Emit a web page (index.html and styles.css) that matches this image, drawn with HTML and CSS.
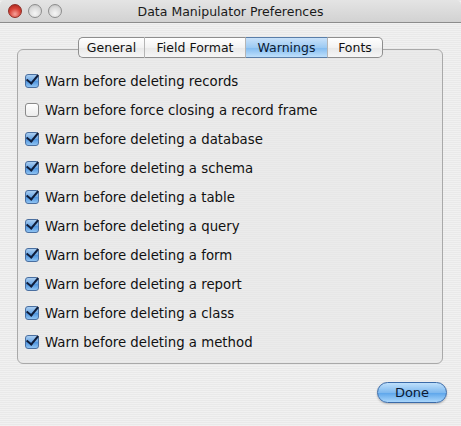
FILE: index.html
```html
<!DOCTYPE html>
<html>
<head>
<meta charset="utf-8">
<link rel="stylesheet" href="styles.css">
</head>
<body>
<div class="window">
  <div class="titlebar">
    <div class="lights">
      <span class="light red"></span>
      <span class="light"></span>
      <span class="light"></span>
    </div>
    <div class="title">Data Manipulator Preferences</div>
  </div>
  <div class="content">
    <div class="tabview">
      <div class="tabs">
        <div class="tab t-general">General</div>
        <div class="tab t-field">Field Format</div>
        <div class="tab t-warn active">Warnings</div>
        <div class="tab t-fonts">Fonts</div>
      </div>
      <div class="box">
        <label class="row"><span class="cb on"></span>Warn before deleting records</label>
        <label class="row"><span class="cb"></span>Warn before force closing a record frame</label>
        <label class="row"><span class="cb on"></span>Warn before deleting a database</label>
        <label class="row"><span class="cb on"></span>Warn before deleting a schema</label>
        <label class="row"><span class="cb on"></span>Warn before deleting a table</label>
        <label class="row"><span class="cb on"></span>Warn before deleting a query</label>
        <label class="row"><span class="cb on"></span>Warn before deleting a form</label>
        <label class="row"><span class="cb on"></span>Warn before deleting a report</label>
        <label class="row"><span class="cb on"></span>Warn before deleting a class</label>
        <label class="row"><span class="cb on"></span>Warn before deleting a method</label>
      </div>
    </div>
    <div class="footer">
      <button class="done">Done</button>
    </div>
  </div>
</div>
</body>
</html>
```
FILE: styles.css
```css
* { box-sizing: border-box; }
html, body { margin: 0; padding: 0; }
body {
  width: 461px;
  height: 426px;
  overflow: hidden;
  font-family: "DejaVu Sans", "Liberation Sans", sans-serif;
  font-size: 12px;
  color: #111;
}
.window {
  width: 461px;
  height: 426px;
  background-color: #e9e9e9;
  background-image: repeating-linear-gradient(0deg, rgba(255,255,255,0.35) 0px, rgba(255,255,255,0.35) 1px, transparent 1px, transparent 2px);
}
.titlebar {
  height: 23px;
  position: relative;
  display: flex;
  align-items: center;
  justify-content: center;
  background: linear-gradient(#e4e4e4, #d2d2d2);
  border-bottom: 1px solid #8c8c8c;
  border-top-left-radius: 5px;
  border-top-right-radius: 5px;
}
.lights {
  position: absolute;
  left: 8px;
  top: 4px;
  display: flex;
  gap: 6px;
}
.light {
  width: 14px;
  height: 14px;
  border-radius: 50%;
  border: 1px solid #8d8d8d;
  background: radial-gradient(circle at 50% 70%, #f6f6f6 0%, #d9d9d9 60%, #b8b8b8 100%);
}
.light.red {
  border-color: #8e2c24;
  background: radial-gradient(circle at 50% 75%, #f7a39b 0%, #d9453a 50%, #a01f17 100%);
}
.title {
  font-size: 12.5px;
  color: #1a1a1a;
  margin-top: 1px;
}
.content {
  padding: 14px 18px 0 17px;
}
.tabview {
  display: flex;
  flex-direction: column;
}
.tabs {
  display: flex;
  justify-content: center;
  position: relative;
  z-index: 1;
  margin-bottom: -9px;
  margin-left: 1px;
}
.tab {
  height: 21px;
  display: flex;
  align-items: center;
  justify-content: center;
  background: linear-gradient(#ffffff, #f2f2f2 50%, #e8e8e8 51%, #f6f6f6);
  border-top: 1px solid #8e8e8e;
  border-bottom: 1px solid #8e8e8e;
  border-right: 1px solid #b5b5b5;
  font-size: 12.5px;
  color: #111;
}
.t-general { width: 67px; border-left: 1px solid #8e8e8e; border-radius: 5px 0 0 5px; }
.t-field { width: 101px; }
.t-warn { width: 82px; }
.t-fonts { width: 55px; border-right: 1px solid #8e8e8e; border-radius: 0 5px 5px 0; }
.tab.active {
  background: linear-gradient(#c9e2fa, #9ccaf3 50%, #80baf0 51%, #bfe0fb);
  border-top-color: #5a7ea8;
  border-bottom-color: #5a7ea8;
  color: #0b1a33;
}
.box {
  height: 315px;
  border: 1px solid #a9a9a9;
  border-radius: 6px;
  background: rgba(228,228,228,0.45);
  padding: 24px 0 0 7px;
  display: flex;
  flex-direction: column;
  gap: 15px;
}
.row {
  display: flex;
  align-items: center;
  height: 14px;
  gap: 6px;
  font-size: 13.3px;
  color: #111;
}
.cb {
  width: 14px;
  height: 14px;
  flex: none;
  border: 1px solid #8a8a8a;
  border-radius: 3px;
  background: linear-gradient(#ffffff, #ececec);
  position: relative;
}
.cb.on {
  border-color: #4a6fa0;
  background: linear-gradient(#a9cdf1, #6aa6e4 50%, #4d93de 51%, #8fc3f2);
}
.cb.on::after {
  content: "";
  position: absolute;
  left: 3px;
  top: -3px;
  width: 5px;
  height: 10px;
  border-right: 2.5px solid #0f1d3a;
  border-bottom: 2.5px solid #0f1d3a;
  transform: rotate(40deg);
}
.footer {
  display: flex;
  justify-content: flex-end;
  padding-top: 18px;
  padding-right: 0;
  margin-right: -4px;
}
.done {
  width: 70px;
  height: 21px;
  border-radius: 11px;
  border: 1px solid #3a6aa8;
  background: linear-gradient(#bfe0fb, #7fb9ef 50%, #5aa4ea 51%, #a9d6fb);
  font-family: "DejaVu Sans", "Liberation Sans", sans-serif;
  font-size: 13px;
  color: #0b1a33;
  padding: 0;
  box-shadow: 0 1px 2px rgba(0,0,0,0.25);
}
```
